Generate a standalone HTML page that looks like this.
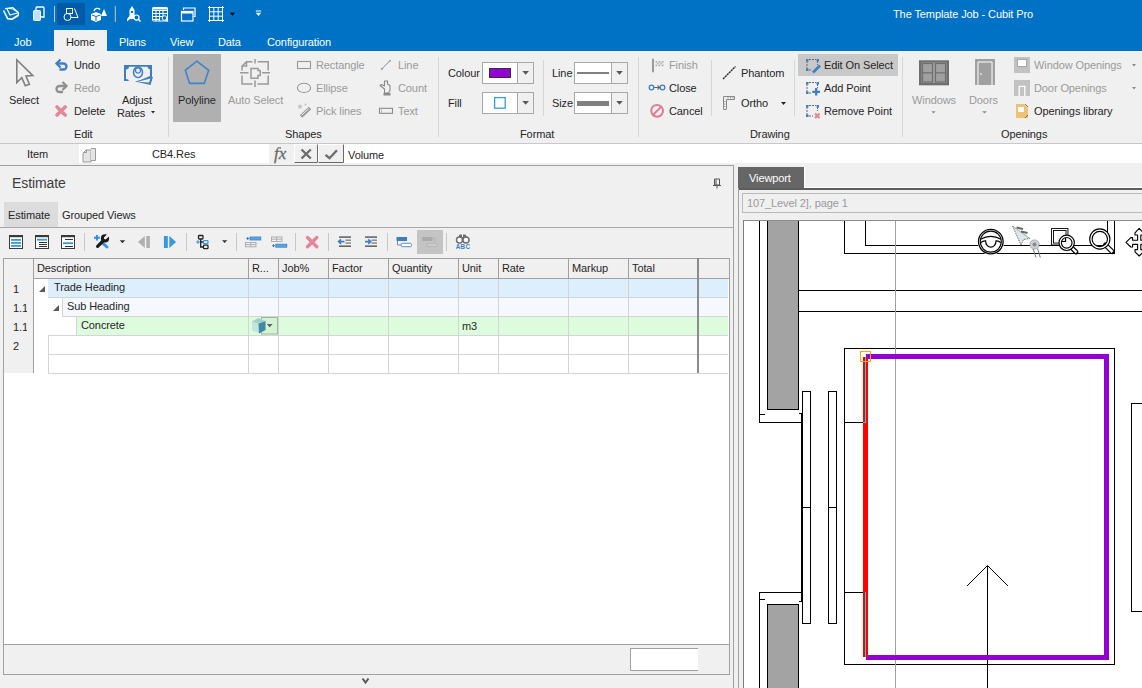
<!DOCTYPE html>
<html><head><meta charset="utf-8">
<style>
*{margin:0;padding:0;box-sizing:border-box}
html,body{width:1142px;height:688px;overflow:hidden;background:#f0f0f0;font-family:"Liberation Sans",sans-serif;font-size:11px;letter-spacing:-0.1px;color:#262626}
.a{position:absolute}
.t{position:absolute;white-space:nowrap;line-height:14px;height:14px}
.w{color:#fff}
.g{color:#9a9a9a}
svg{position:absolute;overflow:visible}
</style></head><body>
<!-- TITLE BAR -->
<div class="a" style="left:0;top:0;width:1142px;height:51px;background:#0072c6"></div>
<div class="a" style="left:57px;top:3px;width:28px;height:22px;background:#005ba6"></div>
<div class="a" style="left:54px;top:30px;width:53px;height:21px;background:#f0f0f0"></div>
<div class="t w" style="left:893px;top:7px">The Template Job - Cubit Pro</div>
<div class="t w" style="left:14px;top:35px">Job</div>
<div class="t" style="left:66px;top:35px;color:#262626">Home</div>
<div class="t w" style="left:119px;top:35px">Plans</div>
<div class="t w" style="left:170px;top:35px">View</div>
<div class="t w" style="left:218px;top:35px">Data</div>
<div class="t w" style="left:267px;top:35px">Configuration</div>

<!-- QAT ICONS -->
<svg style="left:0;top:0" width="1142" height="688" viewBox="0 0 1142 688">
<!-- QAT -->
<g fill="none" stroke="#fff" stroke-linejoin="round" stroke-linecap="round">
<path d="M3.8 11 L7.6 18.6 L12 19.2 L17.8 15.5" stroke-width="1.6"/>
<path d="M5.6 8.6 L12.6 7.6 L18.4 12.4 L18.4 15.2" stroke-width="1.3"/>
<path d="M7 9 L10 15 L17.5 13" stroke-width="1.2"/>
<path d="M9 8.4 L12.5 9 L17.5 12.3" stroke-width="1"/>
<path d="M12 19.5 L18 15.8" stroke-width="1.2"/>
</g>
<rect x="33.5" y="10.5" width="7" height="10" rx="1" fill="#bfe0ff" stroke="#fff" stroke-width="1"/>
<path d="M36 10 V8 A1 1 0 0 1 37 7 H43 A1 1 0 0 1 44 8 V17 H41" fill="none" stroke="#fff" stroke-width="1.3"/>
<path d="M54.5 6 V22" stroke="#c9c4bb" stroke-width="1"/>
<g fill="none" stroke="#fff" stroke-width="1">
<rect x="66.5" y="8.5" width="6" height="5"/>
<circle cx="67.5" cy="17" r="3.5"/>
<path d="M74.5 8.5 L78 17.5 H71"/>
</g>
<g fill="#fff">
<path d="M91 14 L96 12 L101 14 V20 L96 22 L91 20 Z"/>
<path d="M101 16 L104 9 L107 16 Z"/>
</g>
<path d="M92 15 L96 16.5 L100.5 15 M96 16.5 V21" stroke="#0070c6" stroke-width="1" fill="none"/>
<path d="M94 11 A3.5 3.5 0 0 1 100 9.5" stroke="#fff" stroke-width="1.3" fill="none"/>
<path d="M115.3 6 V22" stroke="#c9c4bb" stroke-width="1"/>
<g fill="#fff">
<path d="M132 6 L134.5 10 V16 L137 19 V21 L134 19 H130 L127 21.5 V19 L129.5 16 V10 Z"/>
</g>
<circle cx="132" cy="12" r="1.2" fill="#0070c6"/>
<circle cx="136.5" cy="17.5" r="2.5" fill="#0070c6" stroke="#fff" stroke-width="1.2"/>
<path d="M138.3 19.3 L140.5 21.5" stroke="#fff" stroke-width="1.5"/>
<g fill="none" stroke="#fff" stroke-width="1">
<rect x="152.5" y="7.5" width="15" height="13.5" rx="1"/>
<path d="M152.5 10.5 H167.5 M152.5 13.5 H167.5 M152.5 16.5 H163 M152.5 19.5 H160 M156 10 V21 M159.5 10 V21 M163 10 V16"/>
</g>
<path d="M152.5 8.5 H167.5" stroke="#fff" stroke-width="2"/>
<circle cx="164.5" cy="18" r="2.3" fill="#0070c6" stroke="#fff" stroke-width="1"/>
<path d="M166 19.5 L168 21.5" stroke="#fff" stroke-width="1.3"/>
<g fill="none" stroke="#fff" stroke-width="1.2">
<path d="M183.5 10 V8 H195 V16.5 H193.5"/>
<rect x="181.5" y="11.5" width="11.5" height="9.5"/>
</g>
<path d="M181.5 12.5 H193" stroke="#fff" stroke-width="2"/>
<g fill="none" stroke="#fff" stroke-width="1">
<rect x="209.5" y="7.5" width="13" height="13"/>
<path d="M213.8 7 V21 M218.2 7 V21 M209 11.8 H223 M209 16.2 H223 M208 7.5 H224 M208 20.5 H224 M209.5 6 V22 M222.5 6 V22"/>
</g>
<path d="M230 12.7 H235 L232.5 15.8 Z" fill="#000"/>
<path d="M255.8 11 H261.2" stroke="#fff" stroke-width="1"/>
<path d="M255.8 12.7 H261.2 L258.5 16 Z" fill="#fff"/>
</svg>

<!-- RIBBON -->
<div class="a" style="left:0;top:143px;width:1142px;height:1px;background:#c8c8c8"></div>
<div class="t" style="left:9px;top:93px">Select</div>
<div class="t" style="left:74px;top:58px">Undo</div>
<div class="t g" style="left:74px;top:81px">Redo</div>
<div class="t" style="left:74px;top:104px">Delete</div>
<div class="t" style="left:122px;top:93px">Adjust</div>
<div class="t" style="left:117px;top:106px">Rates</div>
<div class="t" style="left:74px;top:127px">Edit</div>
<div class="a" style="left:168px;top:57px;width:1px;height:80px;background:#d6d6d6"></div>
<div class="a" style="left:173px;top:54px;width:48px;height:68px;background:#b0b0b0"></div>
<div class="t" style="left:178px;top:93px">Polyline</div>
<div class="t g" style="left:228px;top:93px">Auto Select</div>
<div class="t g" style="left:316px;top:58px">Rectangle</div>
<div class="t g" style="left:316px;top:81px">Ellipse</div>
<div class="t g" style="left:316px;top:104px">Pick lines</div>
<div class="t g" style="left:398px;top:58px">Line</div>
<div class="t g" style="left:398px;top:81px">Count</div>
<div class="t g" style="left:398px;top:104px">Text</div>
<div class="t" style="left:285px;top:127px">Shapes</div>
<div class="a" style="left:438px;top:57px;width:1px;height:80px;background:#d6d6d6"></div>
<div class="t" style="left:448px;top:66px">Colour</div>
<div class="t" style="left:448px;top:96px">Fill</div>
<div class="t" style="left:552px;top:66px">Line</div>
<div class="t" style="left:552px;top:96px">Size</div>
<div class="t" style="left:520px;top:127px">Format</div>
<div class="a" style="left:543px;top:60px;width:1px;height:56px;background:#d6d6d6"></div>
<div class="a" style="left:638px;top:57px;width:1px;height:80px;background:#d6d6d6"></div>
<div class="t g" style="left:669px;top:58px">Finish</div>
<div class="t" style="left:669px;top:81px">Close</div>
<div class="t" style="left:669px;top:104px">Cancel</div>
<div class="a" style="left:711px;top:60px;width:1px;height:56px;background:#d6d6d6"></div>
<div class="t" style="left:741px;top:66px">Phantom</div>
<div class="t" style="left:741px;top:96px">Ortho</div>
<div class="t" style="left:750px;top:127px">Drawing</div>
<div class="a" style="left:794px;top:60px;width:1px;height:56px;background:#d6d6d6"></div>
<div class="a" style="left:798px;top:54px;width:100px;height:22px;background:#c8c8c8"></div>
<div class="t" style="left:824px;top:58px">Edit On Select</div>
<div class="t" style="left:824px;top:81px">Add Point</div>
<div class="t" style="left:824px;top:104px">Remove Point</div>
<div class="a" style="left:902px;top:57px;width:1px;height:80px;background:#d6d6d6"></div>
<div class="t g" style="left:912px;top:93px">Windows</div>
<div class="t g" style="left:969px;top:93px">Doors</div>
<div class="t g" style="left:1034px;top:58px">Window Openings</div>
<div class="t g" style="left:1034px;top:81px">Door Openings</div>
<div class="t" style="left:1034px;top:104px">Openings library</div>
<div class="t" style="left:1001px;top:127px">Openings</div>

<!-- RIBBON ICONS -->
<svg style="left:0;top:0" width="1142" height="688" viewBox="0 0 1142 688">
<!-- Select -->
<path d="M16.8 59.8 V82.5 L21.8 77.6 L25.3 85.8 L29.4 84.3 L26 76 L32.8 75.6 Z" fill="none" stroke="#7f7f7f" stroke-width="1.6" stroke-linejoin="miter"/>
<!-- Undo -->
<path d="M57.5 63.5 H63.5 A3 3 0 0 1 63.5 69.5 H59.5" fill="none" stroke="#3f7ec6" stroke-width="2.3"/>
<path d="M60.5 59.5 L56.5 63.5 L60.5 67.5" fill="none" stroke="#3f7ec6" stroke-width="2.3"/>
<!-- Redo -->
<path d="M65.5 86 H59.5 A3 3 0 0 0 59.5 92 H63" fill="none" stroke="#8f8f8f" stroke-width="2.3"/>
<path d="M62.5 82 L66.5 86 L62.5 90" fill="none" stroke="#8f8f8f" stroke-width="2.3"/>
<!-- Delete -->
<path d="M57 107 L65.2 115 M65.2 107 L57 115" stroke="#e5869a" stroke-width="3.6" stroke-linecap="round"/>
<!-- Adjust rates -->
<rect x="124" y="65" width="28" height="16" fill="#3f7dc1"/>
<path d="M126 69.5 A3 3 0 0 0 129 66.8 H147.5 A3 3 0 0 0 150 69.5 V76 L136 82 H129 A3 3 0 0 0 126 79 Z" fill="#f0f0f0"/>
<ellipse cx="138" cy="72.3" rx="4.5" ry="5.3" fill="none" stroke="#3f7dc1" stroke-width="1.5"/>
<circle cx="138" cy="70.5" r="2.5" fill="none" stroke="#3f7dc1" stroke-width="1.2"/>
<path d="M135 81.5 L153 76.8 L150.5 85 Z" fill="#3f7dc1"/>
<path d="M137.5 81.8 L150.5 78.5 L149 82.5 Z" fill="#f0f0f0"/>
<path d="M151 97 H155 L153 99.5 Z" fill="#262626" transform="translate(0,14)"/>
<!-- Polyline -->
<path d="M196.8 61.2 L208.7 70.3 L204.2 83.4 H189.6 L185.3 70.3 Z" fill="none" stroke="#3f84ca" stroke-width="1.6" stroke-linejoin="miter"/>
<!-- Auto Select -->
<g fill="none" stroke="#999" stroke-width="1.5">
<path d="M242 70.5 V66 L246.5 61.7 H252.5 M257.5 61.7 H268.2 V70.5 M268.2 75.5 V84 H257.5 M252.5 84 H242 V75.5"/>
<path d="M242 66 H246.5 V61.7"/>
<path d="M255 59 V63.5 M255 80.5 V87 M240 72.8 H248.5 M262 72.8 H270"/>
<path d="M251 68.5 H258 V70.5 H260.2 V75.5 H258 V78.2 H251 Z"/>
</g>
<!-- Rectangle / Ellipse / Pick lines -->
<rect x="297.5" y="61.5" width="13" height="7" fill="none" stroke="#999" stroke-width="1.1"/>
<ellipse cx="304" cy="87.9" rx="6.6" ry="4.6" fill="none" stroke="#999" stroke-width="1.1"/>
<path d="M301 116.5 L310 108" stroke="#999" stroke-width="3.5"/>
<path d="M301.7 115.2 L308.8 108.6" stroke="#f0f0f0" stroke-width="1"/>
<path d="M300 103.5 L300.8 105.5 L302.8 105.7 L301.3 107 L301.7 109 L300 108 L298.3 109 L298.7 107 L297.2 105.7 L299.2 105.5 Z" fill="#c2c2c2"/>
<circle cx="305.5" cy="104.5" r="1" fill="#c2c2c2"/>
<!-- Line / Count / Text -->
<path d="M382 68.8 L389.6 61" stroke="#8a8a8a" stroke-width="1"/>
<circle cx="381.8" cy="69" r="0.9" fill="#8a8a8a"/><circle cx="390" cy="60.8" r="0.9" fill="#8a8a8a"/>
<path d="M384.5 93 V89 L380 85.5 L381.5 84.5 L384.5 86 V81 H387.5 V84 L390 85.5 V90.5 L388.5 93 Z" fill="#f0f0f0" stroke="#8a8a8a" stroke-width="1.1" stroke-linejoin="round"/>
<rect x="383.5" y="93" width="7" height="2.5" fill="#8a8a8a"/>
<rect x="379.5" y="108.3" width="13" height="5" fill="none" stroke="#8a8a8a" stroke-width="1.1"/>
<path d="M381.5 109.5 V112.5" stroke="#b0b0b0" stroke-width="0.8"/>
<!-- Format boxes -->
<rect x="482.5" y="62.5" width="51" height="21" fill="#fff" stroke="#a8a8a8"/>
<rect x="517.5" y="63" width="15.5" height="20" fill="#f0f0f0"/>
<path d="M517.5 62.5 V83.5" stroke="#a8a8a8"/>
<path d="M522.3 71 H529 L525.65 74.7 Z" fill="#595959"/>
<rect x="489.5" y="68.5" width="21" height="9" fill="#9400d3" stroke="#333"/>
<rect x="482.5" y="92.5" width="51" height="21" fill="#fff" stroke="#a8a8a8"/>
<rect x="517.5" y="93" width="15.5" height="20" fill="#f0f0f0"/>
<path d="M517.5 92.5 V113.5" stroke="#a8a8a8"/>
<path d="M522.3 101 H529 L525.65 104.7 Z" fill="#595959"/>
<rect x="494.6" y="97.6" width="10.6" height="10.6" fill="#fff" stroke="#3d9ad8" stroke-width="1.3"/>
<rect x="574.5" y="62.5" width="53" height="21" fill="#fff" stroke="#a8a8a8"/>
<rect x="611.5" y="63" width="15.5" height="20" fill="#f0f0f0"/>
<path d="M611.5 62.5 V83.5" stroke="#a8a8a8"/>
<path d="M616.2 71 H622.8 L619.5 74.7 Z" fill="#595959"/>
<rect x="577" y="72" width="32" height="2" fill="#808080"/>
<rect x="574.5" y="92.5" width="53" height="21" fill="#fff" stroke="#a8a8a8"/>
<rect x="611.5" y="93" width="15.5" height="20" fill="#f0f0f0"/>
<path d="M611.5 92.5 V113.5" stroke="#a8a8a8"/>
<path d="M616.2 101 H622.8 L619.5 104.7 Z" fill="#595959"/>
<rect x="577" y="101" width="32" height="5" fill="#808080"/>
<!-- Finish / Close / Cancel -->
<path d="M653 59.5 V71.5" stroke="#999" stroke-width="2" stroke-linecap="round"/>
<g fill="#aaa"><rect x="655.5" y="61" width="1.6" height="1.6"/><rect x="658.7" y="61" width="1.6" height="1.6"/><rect x="661.9" y="61" width="1.6" height="1.6"/><rect x="657.1" y="62.8" width="1.6" height="1.6"/><rect x="660.3" y="62.8" width="1.6" height="1.6"/><rect x="655.5" y="64.6" width="1.6" height="1.6"/><rect x="658.7" y="64.6" width="1.6" height="1.6"/><rect x="661.9" y="64.6" width="1.6" height="1.6"/></g>
<circle cx="651.5" cy="87.5" r="2.3" fill="none" stroke="#3f7ec6" stroke-width="1.3"/>
<circle cx="662.5" cy="87.5" r="2.3" fill="none" stroke="#3f7ec6" stroke-width="1.3"/>
<path d="M654 87.5 H659.5 M657.5 85.5 L659.7 87.5 L657.5 89.5" fill="none" stroke="#666" stroke-width="1.1"/>
<circle cx="657.1" cy="110.8" r="5.9" fill="none" stroke="#e27a92" stroke-width="2"/>
<path d="M661.3 106.6 L652.9 115" stroke="#e27a92" stroke-width="2"/>
<!-- Phantom / Ortho -->
<path d="M723 79 L735.5 66.5" stroke="#2a2a2a" stroke-width="1.4" stroke-dasharray="2.2 0.6"/>
<path d="M723.5 109.5 V96.5 H734.5 V99.5 H726.5 V109.5 Z" fill="none" stroke="#888" stroke-width="1"/>
<path d="M728 97 V98.5 M730.5 97 V98.5 M733 97 V98.5 M724 101.5 H725.5 M724 104 H725.5 M724 106.5 H725.5" stroke="#888" stroke-width="0.8"/>
<path d="M781 102 H786 L783.5 105 Z" fill="#262626"/>
<!-- Edit on select / Add / Remove -->
<g fill="none" stroke="#666" stroke-width="1" stroke-dasharray="2 1">
<path d="M807 61 V69 M809 59.5 H816 M817.5 61 V65 M809 70 H812"/>
<path d="M807 84 V92 M809 82.5 H816 M817.5 84 V88 M809 93 H811.5"/>
<path d="M807 107 V115 M809 105.5 H816 M817.5 107 V111 M809 116 H813"/>
</g>
<g fill="#3f7ec6">
<rect x="806" y="59" width="2.5" height="2.5"/><rect x="816.5" y="59" width="2.5" height="2.5"/><rect x="806" y="68.5" width="2.5" height="2.5"/>
<rect x="806" y="82" width="2.5" height="2.5"/><rect x="816.5" y="82" width="2.5" height="2.5"/><rect x="806" y="91.5" width="2.5" height="2.5"/>
<rect x="806" y="105" width="2.5" height="2.5"/><rect x="816.5" y="105" width="2.5" height="2.5"/><rect x="806" y="114.5" width="2.5" height="2.5"/>
</g>
<path d="M813 72.5 L820 65.5" stroke="#3f7ec6" stroke-width="2.6"/>
<path d="M816.2 88 V95.6 M812.3 91.8 H820" stroke="#3f7ec6" stroke-width="2.3"/>
<path d="M815 113.5 L819.5 118 M819.5 113.5 L815 118" stroke="#e5869a" stroke-width="2.2"/>
<!-- Windows / Doors -->
<rect x="919" y="60.3" width="30" height="25" fill="#6e6e6e"/>
<rect x="921.5" y="62.5" width="25" height="20.5" fill="#a0a0a0"/>
<g fill="none" stroke="#6e6e6e" stroke-width="1.2"><rect x="922.5" y="63.5" width="10" height="18.5"/><rect x="935.5" y="63.5" width="10" height="18.5"/><path d="M922.5 72.8 H932.5 M935.5 72.8 H945.5"/></g>
<path d="M931.4 111.2 H935.6 L933.5 113.5 Z" fill="#8a8a8a"/>
<rect x="975" y="59" width="20" height="26" fill="#a0a0a0"/>
<path d="M978 85 V62 H992 V85" fill="none" stroke="#fff" stroke-width="1"/>
<path d="M980 74 H982" stroke="#fff" stroke-width="1"/>
<path d="M982.2 111.2 H986.9 L984.5 113.5 Z" fill="#8a8a8a"/>
<!-- Openings -->
<rect x="1014" y="57" width="16" height="16" fill="#c2c2c2"/>
<rect x="1017.5" y="59.5" width="9" height="7" fill="#fff" stroke="#a8a8a8"/>
<rect x="1014" y="80" width="16" height="16" fill="#c2c2c2"/>
<path d="M1019.2 96 V86.3 H1024.8 V96" fill="none" stroke="#fff" stroke-width="1.3"/>
<path d="M1016 104 H1024 L1028 108 V118 H1016 Z" fill="#edc373"/>
<rect x="1018" y="107" width="6" height="5" fill="#fff" opacity="0.9"/>
<path d="M1025 104 L1028 107 M1025 118 L1028 115" stroke="#555" stroke-width="0.8"/>
<path d="M1132 64 H1136 L1134 66.5 Z M1132 87 H1136 L1134 89.5 Z" fill="#8a8a8a"/>
</svg>

<!-- FORMULA BAR -->
<div class="a" style="left:0;top:144px;width:1142px;height:21px;background:#f0f0f0"></div>
<div class="t" style="left:27px;top:147px">Item</div>
<div class="a" style="left:79px;top:144px;width:190px;height:19px;background:#fff"></div>
<div class="t" style="left:152px;top:147px">CB4.Res</div>
<div class="a" style="left:344px;top:144px;width:798px;height:19px;background:#fff"></div>
<div class="t" style="left:348px;top:148px">Volume</div>
<div class="a" style="left:0;top:165px;width:734px;height:1px;background:#a0a0a0"></div>

<!-- ESTIMATE PANEL -->
<div class="t" style="left:12px;top:175px;font-size:14px;line-height:16px;height:16px;color:#3c3c3c">Estimate</div>
<div class="a" style="left:4px;top:202px;width:54px;height:25px;background:#dcdcdc"></div>
<div class="t" style="left:8px;top:208px">Estimate</div>
<div class="t" style="left:62px;top:208px">Grouped Views</div>
<div class="a" style="left:0;top:227px;width:733px;height:1px;background:#a8a8a8"></div>

<!-- GRID -->
<div class="a" style="left:3px;top:258px;width:727px;height:386px;background:#fff;border:1px solid #a0a0a0;border-bottom:none"></div>
<div class="a" style="left:3px;top:258px;width:727px;height:21px;background:#f0f0f0;border:1px solid #a0a0a0"></div>
<div class="a" style="left:3px;top:278px;width:31px;height:95px;background:#f0f0f0;border-left:1px solid #a0a0a0;border-right:1px solid #a0a0a0"></div>
<div class="a" style="left:48px;top:279px;width:649px;height:18px;background:#ddeefc"></div>
<div class="a" style="left:697px;top:279px;width:31px;height:18px;background:#ddeefc"></div>
<div class="a" style="left:62px;top:298px;width:635px;height:18px;background:#f5f9ff"></div>
<div class="a" style="left:697px;top:298px;width:31px;height:18px;background:#f5f9ff"></div>
<div class="a" style="left:76px;top:317px;width:621px;height:18px;background:#ddfcdd"></div>
<div class="a" style="left:697px;top:317px;width:31px;height:18px;background:#ddfcdd"></div>
<div class="a" style="left:33px;top:258px;width:1px;height:21px;background:#a0a0a0"></div>
<div class="a" style="left:248px;top:258px;width:1px;height:21px;background:#a0a0a0"></div>
<div class="a" style="left:278px;top:258px;width:1px;height:21px;background:#a0a0a0"></div>
<div class="a" style="left:328px;top:258px;width:1px;height:21px;background:#a0a0a0"></div>
<div class="a" style="left:388px;top:258px;width:1px;height:21px;background:#a0a0a0"></div>
<div class="a" style="left:458px;top:258px;width:1px;height:21px;background:#a0a0a0"></div>
<div class="a" style="left:498px;top:258px;width:1px;height:21px;background:#a0a0a0"></div>
<div class="a" style="left:568px;top:258px;width:1px;height:21px;background:#a0a0a0"></div>
<div class="a" style="left:628px;top:258px;width:1px;height:21px;background:#a0a0a0"></div>
<div class="a" style="left:697px;top:258px;width:1px;height:21px;background:#a0a0a0"></div>
<div class="a" style="left:48px;top:297px;width:680px;height:1px;background:#d4d4d4"></div>
<div class="a" style="left:62px;top:316px;width:666px;height:1px;background:#d4d4d4"></div>
<div class="a" style="left:48px;top:335px;width:680px;height:1px;background:#d4d4d4"></div>
<div class="a" style="left:48px;top:354px;width:680px;height:1px;background:#d4d4d4"></div>
<div class="a" style="left:48px;top:373px;width:680px;height:1px;background:#d4d4d4"></div>
<div class="a" style="left:248px;top:279px;width:1px;height:94px;background:#d4d4d4"></div>
<div class="a" style="left:278px;top:279px;width:1px;height:94px;background:#d4d4d4"></div>
<div class="a" style="left:328px;top:279px;width:1px;height:94px;background:#d4d4d4"></div>
<div class="a" style="left:388px;top:279px;width:1px;height:94px;background:#d4d4d4"></div>
<div class="a" style="left:458px;top:279px;width:1px;height:94px;background:#d4d4d4"></div>
<div class="a" style="left:498px;top:279px;width:1px;height:94px;background:#d4d4d4"></div>
<div class="a" style="left:568px;top:279px;width:1px;height:94px;background:#d4d4d4"></div>
<div class="a" style="left:628px;top:279px;width:1px;height:94px;background:#d4d4d4"></div>
<div class="a" style="left:697px;top:258px;width:2px;height:115px;background:#8c8c8c"></div>
<div class="a" style="left:48px;top:335px;width:1px;height:38px;background:#d4d4d4"></div>
<div class="a" style="left:62px;top:297px;width:1px;height:19px;background:#d4d4d4"></div>
<div class="a" style="left:76px;top:316px;width:1px;height:19px;background:#d4d4d4"></div>
<div class="t" style="left:37px;top:261px">Description</div>
<div class="t" style="left:252px;top:261px">R...</div>
<div class="t" style="left:282px;top:261px">Job%</div>
<div class="t" style="left:332px;top:261px">Factor</div>
<div class="t" style="left:392px;top:261px">Quantity</div>
<div class="t" style="left:462px;top:261px">Unit</div>
<div class="t" style="left:502px;top:261px">Rate</div>
<div class="t" style="left:572px;top:261px">Markup</div>
<div class="t" style="left:632px;top:261px">Total</div>
<div class="t" style="left:13px;top:282px;width:14px;overflow:hidden">1</div>
<div class="t" style="left:13px;top:301px;width:14px;overflow:hidden">1.1</div>
<div class="t" style="left:13px;top:320px;width:14px;overflow:hidden">1.1</div>
<div class="t" style="left:13px;top:339px;width:14px;overflow:hidden">2</div>
<div class="t" style="left:54px;top:280px">Trade Heading</div>
<div class="t" style="left:67px;top:299px">Sub Heading</div>
<div class="t" style="left:81px;top:318px">Concrete</div>
<div class="t" style="left:462px;top:319px">m3</div>
<svg style="left:0;top:0" width="1" height="1"><path d="M39 292 L45 292 L45 286 Z" fill="#595959"/><path d="M53 311 L59 311 L59 305 Z" fill="#595959"/></svg>
<div class="a" style="left:3px;top:644px;width:727px;height:31px;background:#f0f0f0;border:1px solid #a0a0a0"></div>
<div class="a" style="left:630px;top:648px;width:68px;height:23px;background:#fff;border:1px solid #a0a0a0;border-right:none"></div>

<!-- VIEWPORT -->
<div class="a" style="left:737px;top:166px;width:405px;height:522px;background:#f0f0f0"></div>
<div class="a" style="left:738px;top:167px;width:66px;height:21px;background:#666"></div>
<div class="a" style="left:804px;top:167px;width:1px;height:21px;background:#fff"></div>
<div class="a" style="left:804px;top:187px;width:338px;height:1px;background:#fff"></div>
<div class="t w" style="left:749px;top:171px">Viewport</div>
<div class="a" style="left:733px;top:165px;width:1px;height:523px;background:#a0a0a0"></div>
<div class="a" style="left:738px;top:188px;width:404px;height:2px;background:#5e5e5e"></div>
<div class="a" style="left:738px;top:188px;width:1px;height:500px;background:#a0a0a0"></div>
<div class="a" style="left:742px;top:193px;width:400px;height:20px;background:#f0f0f0;border:1px solid #b9b9b9;border-right:none"></div>
<div class="t" style="left:747px;top:196px;color:#9a9a9a">107_Level 2], page 1</div>
<div class="a" style="left:743px;top:220px;width:399px;height:468px;background:#fff;border-top:1px solid #8c8c8c;border-left:1px solid #7c7c7c"></div>
<svg style="left:0;top:0" width="1142" height="688" viewBox="0 0 1142 688" shape-rendering="crispEdges"><defs><clipPath id="dc"><rect x="744" y="221" width="398" height="467"/></clipPath></defs><g clip-path="url(#dc)">
<g fill="none" stroke="#000" stroke-width="1">
<path d="M759.5 210 V422.5 H802 M759.5 414.5 H765 M798.5 413.5 H802"/>
<path d="M759.5 688 V592.5 H802 M759.5 599.5 H765 M798.5 601.5 H802"/>
<rect x="767.5" y="210" width="31" height="199.5" fill="#a3a3a3"/>
<rect x="767.5" y="604.5" width="31" height="90" fill="#a3a3a3"/>
<path d="M801.5 413 V601" stroke-width="2"/>
<rect x="802.5" y="391.5" width="8" height="232"/>
<path d="M802.5 507.5 H810.5"/>
<rect x="828.5" y="391.5" width="8" height="232"/>
<path d="M828.5 507.5 H836.5"/>
<path d="M844.5 210 V253.5 H1114.5 V210 M865.5 210 V245.5 H1107.5 V210"/>
<path d="M798 290.5 H1142 M798 311.5 H1142"/>
<rect x="844.5" y="348.5" width="270" height="316"/>
<path d="M844.5 422.5 H865 M844.5 592.5 H865"/>
<rect x="1131.5" y="403.5" width="30" height="208"/>
<path d="M987.5 566 V688 M967 586 L987.5 565.5 L1008 586" shape-rendering="auto"/>
</g>
<path d="M895.5 221 V688" stroke="#a0a0a0" fill="none"/>
<path d="M866 356.5 H1106 V657.5 H866" stroke="#9400d3" stroke-width="5" fill="none"/>
<path d="M865.5 357 V657" stroke="#ff0000" stroke-width="5" fill="none"/>
<path d="M865.5 357 V422.5 H863 M865.5 592 V657" stroke="#00e0e0" stroke-width="1" fill="none"/>
<rect x="860.5" y="351.5" width="10" height="10" stroke="#ffa500" fill="none"/>
</g></svg>

<!-- ICONS3 -->
<svg style="left:0;top:0" width="1142" height="688" viewBox="0 0 1142 688">
<!-- formula bar -->
<path d="M84 152 L86 150 H91 V162 H83 V153 Z" fill="#e4e4e4" stroke="#9a9a9a" stroke-width="1"/>
<path d="M84 152.5 H86.5 V150" fill="none" stroke="#9a9a9a" stroke-width="1"/>
<path d="M91 148.5 H95.5 V160.5 H91" fill="#e4e4e4" stroke="#9a9a9a" stroke-width="1"/>
<text x="274" y="159" font-family="Liberation Serif" font-style="italic" font-size="17" fill="#6a6a6a" stroke="#6a6a6a" stroke-width="0.3" letter-spacing="0">fx</text>
<rect x="294.5" y="144.5" width="23" height="18" fill="#f0f0f0" stroke="#fff"/>
<path d="M294.5 162.5 H317.5 V144.5" fill="none" stroke="#6a6a6a" stroke-width="1"/>
<path d="M301.5 149.5 L310.8 158.5 M310.8 149.5 L301.5 158.5" stroke="#6d6d6d" stroke-width="2.4"/>
<rect x="318.5" y="144.5" width="25" height="18" fill="#f0f0f0" stroke="#fff"/>
<path d="M318.5 162.5 H343.5 V144.5" fill="none" stroke="#6a6a6a" stroke-width="1"/>
<path d="M325.5 154.8 L329.5 158.2 L337 150.2" fill="none" stroke="#6d6d6d" stroke-width="2.4"/>
<!-- estimate pin -->
<path d="M714.5 179 H719.5 V185 H714.5 Z M713 185.5 H721 M717 185.5 V188.5" fill="none" stroke="#555" stroke-width="1"/>
<path d="M716 179.5 V185" stroke="#555" stroke-width="1"/>
<!-- estimate toolbar -->
<g>
<rect x="9.5" y="235.5" width="13" height="13" fill="#fff" stroke="#3a3a3a"/>
<rect x="9" y="235" width="14" height="2.2" fill="#3a3a3a"/>
<rect x="11" y="239" width="10" height="1.8" fill="#3a96dd"/><rect x="11" y="242" width="10" height="1.8" fill="#3a96dd"/><rect x="11" y="245" width="10" height="1.8" fill="#3a96dd"/>
<rect x="35.5" y="235.5" width="13" height="13" fill="#fff" stroke="#3a3a3a"/>
<rect x="35" y="235" width="14" height="2.2" fill="#3a3a3a"/>
<rect x="37" y="238.8" width="10" height="1.8" fill="#3a96dd"/><rect x="39" y="242" width="8" height="1" fill="#333"/><rect x="39" y="244" width="8" height="1" fill="#333"/><rect x="39" y="246" width="8" height="1" fill="#333"/>
<rect x="61.5" y="235.5" width="13" height="13" fill="#fff" stroke="#3a3a3a"/>
<rect x="61" y="235" width="14" height="2.2" fill="#3a3a3a"/>
<rect x="65" y="239" width="8" height="1" fill="#333"/><rect x="63" y="242.3" width="10" height="1.8" fill="#3a96dd"/><rect x="65" y="246" width="8" height="1" fill="#333"/>
</g>
<path d="M84.5 233 V251" stroke="#c8c8c8"/>
<path d="M94 237.8 H99.8 M96.9 235 V240.6" stroke="#2a8fdc" stroke-width="1.9"/>
<path d="M103.2 243.6 L107 247" stroke="#3a96dd" stroke-width="3" stroke-linecap="round"/>
<path d="M97.6 246.4 L103 241" stroke="#1a1a1a" stroke-width="3.2" stroke-linecap="round"/>
<circle cx="105" cy="238.4" r="4.1" fill="#1a1a1a"/>
<path d="M105.3 238.1 L109.5 233.9" stroke="#f0f0f0" stroke-width="2.8" stroke-linecap="round"/>
<path d="M119.7 240.3 H125.2 L122.45 243.2 Z" fill="#333"/>
<path d="M144.8 236 V248 L138 242 Z" fill="#b0b0b0"/><rect x="146.3" y="236" width="3.6" height="12" fill="#b0b0b0"/>
<rect x="163.9" y="236" width="3.9" height="12" fill="#3a96dd"/><path d="M169.3 236 V248 L176.1 242 Z" fill="#3a96dd"/>
<path d="M186.5 233 V251" stroke="#c8c8c8"/>
<g fill="none" stroke="#222" stroke-width="1.3">
<rect x="198.5" y="235.5" width="4.5" height="3.5" rx="0.8"/>
<rect x="203.5" y="245.2" width="4.5" height="3.5" rx="0.8"/>
<path d="M200.7 239 V247 H203.5 M200.7 242 H203.5"/>
</g>
<rect x="203.5" y="240.7" width="4.5" height="3" rx="0.8" fill="none" stroke="#3a96dd" stroke-width="1.2"/>
<path d="M196 242 H200 M198 240 V244" stroke="#3a96dd" stroke-width="1"/>
<path d="M222 240.3 H227.3 L224.65 243 Z" fill="#333"/>
<path d="M236.5 233 V251" stroke="#c8c8c8"/>
<rect x="250" y="237" width="10.8" height="3" fill="#5aa8e8" stroke="#3a7ec6" stroke-width="0.8"/>
<path d="M246.2 238.5 H249.2 M247.7 237 V240" stroke="#3a7ec6" stroke-width="1"/>
<g fill="none" stroke="#a8a8a8" stroke-width="0.9"><rect x="245.5" y="242.5" width="10.5" height="4.3"/><path d="M245.5 244.6 H256 M250.7 242.5 V246.8"/></g>
<g fill="none" stroke="#a8a8a8" stroke-width="0.9"><rect x="271.5" y="237" width="10.5" height="4.5"/><path d="M271.5 239.2 H282 M276.7 237 V241.5"/></g>
<rect x="275.8" y="244.2" width="11" height="3" fill="#5aa8e8" stroke="#3a7ec6" stroke-width="0.8"/>
<path d="M272 245.7 H275 M273.5 244.2 V247.2" stroke="#3a7ec6" stroke-width="1"/>
<path d="M295.5 233 V251" stroke="#c8c8c8"/>
<path d="M307.5 237.5 L316.8 246.8 M316.8 237.5 L307.5 246.8" stroke="#e5869a" stroke-width="3.4" stroke-linecap="round"/>
<path d="M328.5 233 V251" stroke="#c8c8c8"/>
<g fill="#666"><rect x="339" y="236.3" width="12" height="1.6"/><rect x="339" y="245.4" width="12" height="1.6"/><rect x="345.5" y="239.6" width="5.5" height="1.1"/><rect x="345.5" y="242.5" width="5.5" height="1.1"/>
<rect x="365" y="236.3" width="12" height="1.6"/><rect x="365" y="245.4" width="12" height="1.6"/><rect x="371.5" y="239.6" width="5.5" height="1.1"/><rect x="371.5" y="242.5" width="5.5" height="1.1"/></g>
<path d="M344.5 241.6 H338.8 M341 239.3 L338.6 241.6 L341 243.9" fill="none" stroke="#3f7ec6" stroke-width="1.6"/>
<path d="M365 241.6 H370.5 M368.3 239.3 L370.7 241.6 L368.3 243.9" fill="none" stroke="#3f7ec6" stroke-width="1.6"/>
<path d="M387.5 233 V251" stroke="#c8c8c8"/>
<rect x="396.5" y="237" width="10.5" height="4" fill="#3f7dc1"/>
<path d="M397.5 241 V245 H401" fill="none" stroke="#888" stroke-width="1"/>
<rect x="401.3" y="243.3" width="10.2" height="3.4" rx="1" fill="#fff" stroke="#5a8fd0" stroke-width="1"/>
<rect x="417" y="230" width="26" height="24" fill="#c4c4c4"/>
<rect x="422" y="237" width="10.5" height="4" fill="#aaa"/>
<path d="M433 238 H435 V244" fill="none" stroke="#b4b4b4" stroke-width="1"/>
<rect x="427" y="243.3" width="10.2" height="3.4" rx="1" fill="#cdcdcd" stroke="#b4b4b4" stroke-width="1"/>
<path d="M446.5 233 V251" stroke="#c8c8c8"/>
<path d="M457 240 L459.5 234.5 H462 V237 H463 V234.5 H465.5 L468.5 240" fill="#6d6d6d"/>
<circle cx="459.5" cy="240" r="3" fill="#fff" stroke="#6d6d6d" stroke-width="1.5"/>
<circle cx="466" cy="240" r="3" fill="#fff" stroke="#6d6d6d" stroke-width="1.5"/>
<text x="455.7" y="249" font-family="Liberation Sans" font-weight="bold" font-size="6.3" fill="#3f7ec6" letter-spacing="0.3">ABC</text>
<!-- cube in grid -->
<rect x="261.5" y="317.5" width="16" height="16.5" fill="#d4f2d4" stroke="#9ab89a"/>
<path d="M266.8 324 H272.6 L269.7 327.2 Z" fill="#4a6a5a"/>
<path d="M252 321.5 L258.5 318 L265.5 321 V330 L259 333.5 L252 330.5 Z" fill="#c4e4dc"/>
<path d="M258.5 323.5 L265.5 321 V330 L259 333.5 Z" fill="#3b8aa8"/>
<path d="M252 321.5 L258.5 323.5 L265.5 321 L258.5 318 Z" fill="#a0d0cc"/>
<!-- chevron -->
<path d="M362.5 678.5 L365.5 682.5 L368.5 678.5" fill="none" stroke="#595959" stroke-width="2"/>
<!-- nav icons -->
<circle cx="990.8" cy="241.6" r="13.4" fill="#fff"/>
<g fill="none" stroke="#000">
<circle cx="990.8" cy="241.6" r="12.3" stroke-width="1.3"/>
<circle cx="990.8" cy="241.6" r="10.5" stroke-width="1.1"/>
<path d="M980.5 239.3 Q990.8 233.6 1001.1 239.3" stroke-width="1.2"/>
<path d="M980.9 242.6 Q983 240.6 985.6 240.9 A5.2 6.3 0 0 0 996 240.9 Q998.6 240.6 1000.7 242.6" stroke-width="1.2"/>
</g>
<g>
<path d="M1012.5 226 L1021 245 L1023.5 239.5 L1030 238.5 Z" fill="#dde6ea" stroke="#777" stroke-width="1" stroke-dasharray="1.6 0.9"/>
<path d="M1016.5 227.5 L1023 229 M1021 231.5 L1027.5 233" stroke="#666" stroke-width="1.8"/>
<circle cx="1034.5" cy="244.5" r="4.6" fill="#c8d2d8" stroke="#888" stroke-width="1" stroke-dasharray="1.2 0.8"/>
<circle cx="1034.5" cy="244.5" r="2" fill="#8a8a8a"/>
<path d="M1033.2 249 L1036 257.5 M1037.6 248.5 L1040.3 257.5" stroke="#777" stroke-width="1"/>
</g>
<g>
<rect x="1052.5" y="229.5" width="14.5" height="14.5" fill="none" stroke="#000" stroke-width="2.8"/>
<rect x="1052.5" y="229.5" width="14.5" height="14.5" fill="none" stroke="#fff" stroke-width="1"/>
<path d="M1071.5 247.5 L1076 252" stroke="#000" stroke-width="4.8" stroke-linecap="round"/>
<path d="M1071.5 247.5 L1076.5 252.5" stroke="#fff" stroke-width="2.4"/>
<circle cx="1066.7" cy="242.8" r="6.5" fill="#fff" stroke="#000" stroke-width="3.5"/>
<circle cx="1066.7" cy="242.8" r="6.5" fill="none" stroke="#fff" stroke-width="1.2"/>
<path d="M1062 241.5 H1065.5 V238" fill="none" stroke="#000" stroke-width="1.2"/>
</g>
<g>
<path d="M1105.5 245 L1112 251.5" stroke="#000" stroke-width="5" stroke-linecap="round"/>
<path d="M1105.5 245 L1112.5 252" stroke="#fff" stroke-width="2.6"/>
<circle cx="1099.8" cy="239" r="8.9" fill="none" stroke="#000" stroke-width="3.6"/>
<circle cx="1099.8" cy="239" r="8.9" fill="none" stroke="#fff" stroke-width="1.3"/>
</g>
<g>
<path d="M1126 242.3 L1130.8 237.6 H1132.6 V240.3 H1137.6 V235 H1135 V232.8 L1139.2 228.4 L1143.4 232.8 V235 H1140.8 V240.3 H1147 V244.4 H1140.8 V249.6 H1143.4 V251.8 L1139.2 256 L1135 251.8 V249.6 H1137.6 V244.4 H1132.6 V247 H1130.8 Z" fill="#fff" stroke="#000" stroke-width="1.1" stroke-linejoin="round"/>
</g>
</svg>

</body></html>
